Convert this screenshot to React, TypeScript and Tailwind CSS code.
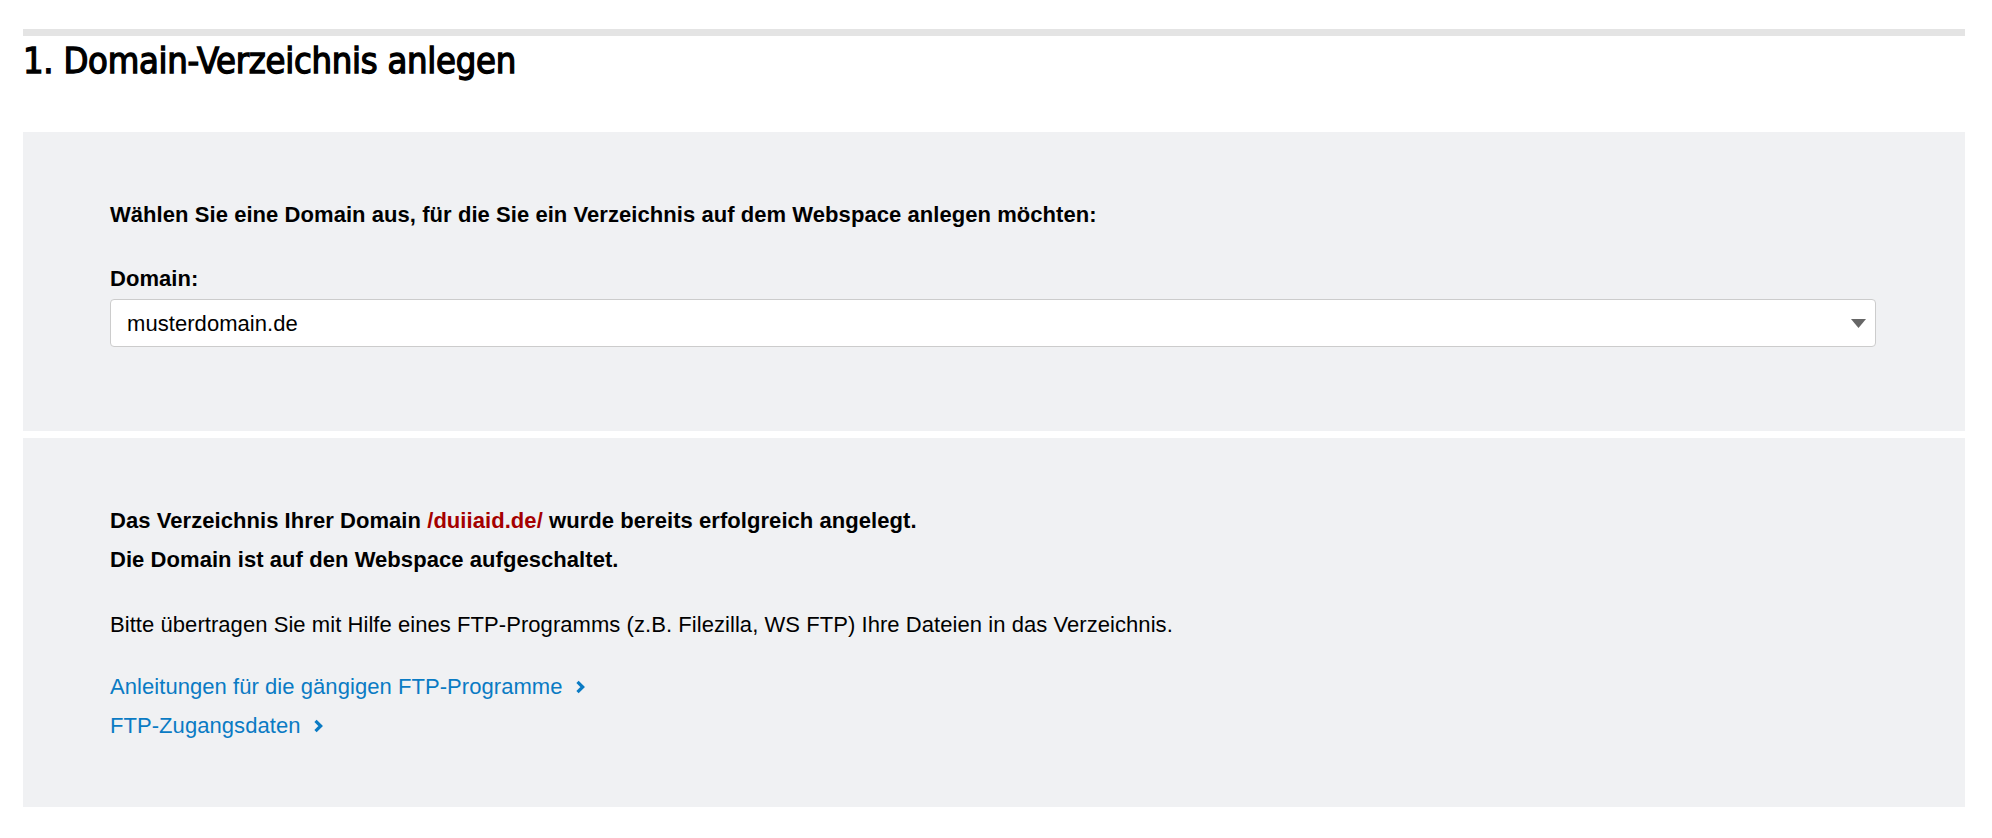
function Chevron() {
  return (
    <svg width="11" height="14" viewBox="0 0 11 14" className="shrink-0">
      <path d="M2.5 1.8 7.7 7l-5.2 5.2" fill="none" stroke="currentColor" strokeWidth="3.2" />
    </svg>
  )
}

export default function App() {
  return (
    <div className="min-h-screen bg-white pl-[23px] pr-[27px] pt-[29px] text-black tracking-[0.06px] [font-family:'Liberation_Sans',Arial,sans-serif]">
      <div className="border-t-[7px] border-[#e4e4e4]">
        <h1 className="h-[96px] pt-[3px] text-[36px] leading-[44px] font-normal tracking-[-0.25px] [-webkit-text-stroke:1.3px_black] [font-family:'DejaVu_Sans_Condensed','DejaVu_Sans',sans-serif]">
          1. Domain-Verzeichnis anlegen
        </h1>
      </div>

      <section className="bg-[#f0f1f3] pl-[87px] pr-[89px] pt-[68px] pb-[84px]">
        <p className="text-[22px] leading-[30px] font-bold">
          Wählen Sie eine Domain aus, für die Sie ein Verzeichnis auf dem Webspace anlegen möchten:
        </p>
        <label className="mt-[34px] block text-[22px] leading-[30px] font-bold">Domain:</label>
        <div className="mt-[5px] flex h-[48px] items-center justify-between rounded-[4px] border border-[#cccccc] bg-white pl-[16px] pr-[9px]">
          <span className="text-[22px]">musterdomain.de</span>
          <svg width="15" height="9" viewBox="0 0 15 9">
            <path d="M0 0h15L7.5 9z" fill="#666666" />
          </svg>
        </div>
      </section>

      <section className="mt-[7px] bg-[#f0f1f3] px-[87px] pt-[63px] pb-[66px]">
        <p className="text-[22px] leading-[39px] font-bold">
          Das Verzeichnis Ihrer Domain <span className="text-[#a50000]">/duiiaid.de/</span> wurde bereits erfolgreich angelegt.
          <br />
          Die Domain ist auf den Webspace aufgeschaltet.
        </p>
        <p className="mt-[31px] text-[22px] leading-[30px]">
          Bitte übertragen Sie mit Hilfe eines FTP-Programms (z.B. Filezilla, WS FTP) Ihre Dateien in das Verzeichnis.
        </p>
        <div className="mt-[32px] flex flex-col items-start gap-[9px] text-[22px] leading-[30px] text-[#0a7bc4]">
          <a href="#" className="flex items-center gap-[12px]">
            Anleitungen für die gängigen FTP-Programme
            <Chevron />
          </a>
          <a href="#" className="flex items-center gap-[12px]">
            FTP-Zugangsdaten
            <Chevron />
          </a>
        </div>
      </section>
    </div>
  )
}
